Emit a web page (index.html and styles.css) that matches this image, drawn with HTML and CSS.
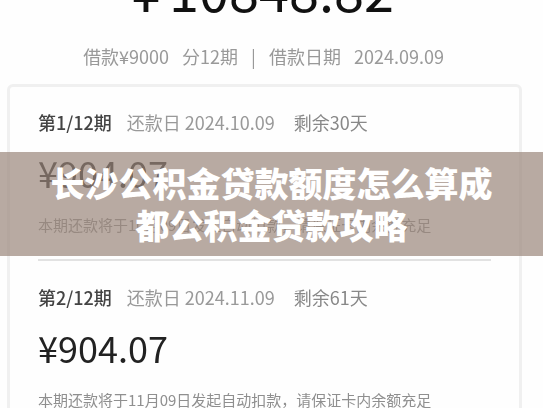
FILE: index.html
```html
<!DOCTYPE html>
<html lang="zh-CN">
<head>
<meta charset="utf-8">
<title>长沙公积金贷款额度怎么算成都公积金贷款攻略</title>
<link rel="stylesheet" href="styles.css">
</head>
<body>
<main class="page">
  <div class="bill">
    <header class="summary">
      <div class="total"><span>¥</span><span>10848.82</span></div>
      <div class="meta">
        <span>借款¥9000</span><span>分12期</span><span>|</span><span>借款日期</span><span>2024.09.09</span>
      </div>
    </header>
    <section class="card">
      <article class="item">
        <div class="row"><strong>第1/12期</strong><span class="due"><span>还款日</span><span>2024.10.09</span></span><span class="left">剩余30天</span></div>
        <div class="amount">¥904.07</div>
        <p class="note">本期还款将于10月09日发起自动扣款，请保证卡内余额充足</p>
      </article>
      <article class="item">
        <div class="row"><strong>第2/12期</strong><span class="due"><span>还款日</span><span>2024.11.09</span></span><span class="left">剩余61天</span></div>
        <div class="amount">¥904.07</div>
        <p class="note">本期还款将于11月09日发起自动扣款，请保证卡内余额充足</p>
      </article>
    </section>
  </div>
  <div class="banner"><h1>长沙公积金贷款额度怎么算成都公积金贷款攻略</h1></div>
</main>
</body>
</html>
```
FILE: styles.css
```css
* { box-sizing: border-box; }
body {
  margin: 0;
  background: #fefefe;
  font-family: "Noto Sans CJK SC", sans-serif;
  color: #999;
}
.page {
  position: relative;
  height: 100vh;
  overflow: hidden;
}
.bill {
  display: flow-root;
  filter: blur(0.6px);
}
.summary {
  margin-top: -41px;
}
.total {
  display: flex;
  justify-content: center;
  gap: 8px;
  padding-right: 18px;
  font-size: 54px;
  line-height: 60px;
  color: #111;
}
.meta {
  display: flex;
  justify-content: center;
  gap: 13px;
  margin-top: 23px;
  padding-right: 16px;
  font-size: 18px;
  line-height: 28px;
}
.card {
  margin: 14px 21px 0 7px;
  padding: 21px 28px;
  border: 3px solid #f0f0f0;
  border-radius: 6px;
}
.item + .item {
  margin-top: 22px;
  padding-top: 22px;
  border-top: 2px solid #e2e2e2;
}
.row {
  display: flex;
  gap: 15px;
  font-size: 18px;
  line-height: 28px;
}
.row strong {
  font-weight: 500;
  color: #444;
}
.due {
  display: flex;
  gap: 4px;
}
.left {
  margin-left: 4px;
  color: #888;
}
.amount {
  margin-top: 12px;
  font-size: 36px;
  line-height: 48px;
  color: #222;
}
.note {
  margin: 17px 0 0;
  font-size: 15px;
  line-height: 24px;
  white-space: nowrap;
  color: #8f8f8f;
}
.banner {
  position: absolute;
  top: 152px;
  left: 0;
  right: 0;
  padding: 10px 48px;
  background: rgba(154, 134, 122, 0.7);
}
h1 {
  margin: 0;
  font-size: 34px;
  font-weight: 900;
  line-height: 42px;
  text-align: center;
  color: #fff;
}
```
